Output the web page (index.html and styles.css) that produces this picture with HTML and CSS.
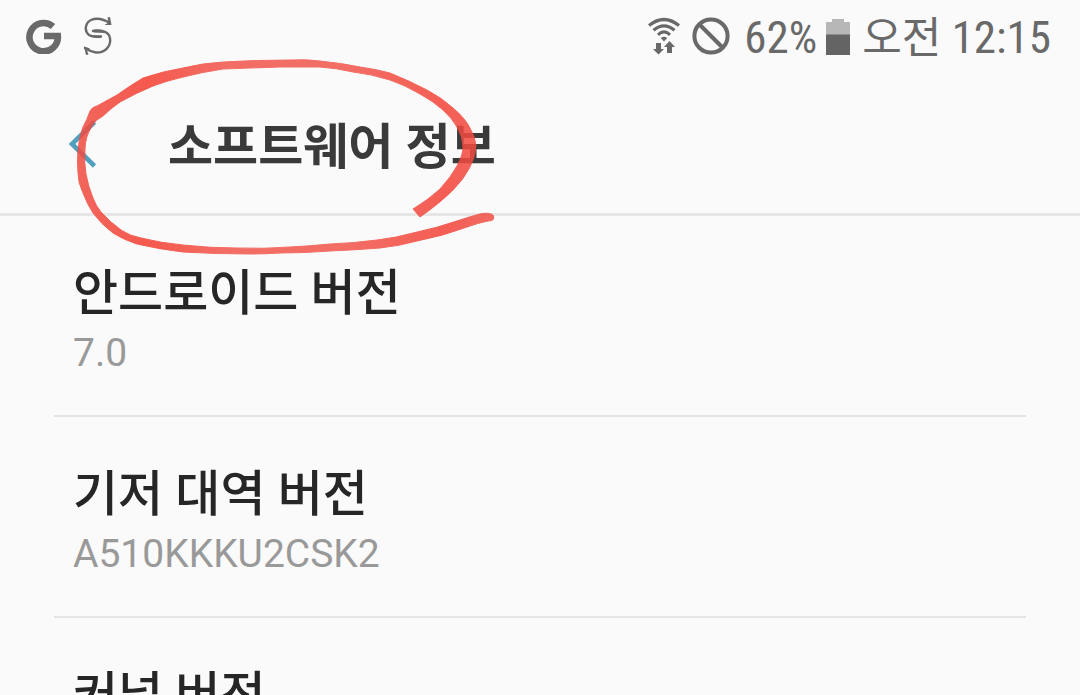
FILE: index.html
```html
<!DOCTYPE html>
<html lang="ko">
<head>
<meta charset="utf-8">
<meta name="viewport" content="width=device-width, initial-scale=1">
<title>소프트웨어 정보</title>
<link rel="stylesheet" href="styles.css">
</head>
<body>
<div class="screen">
  <div class="status-bar">
    <div class="status-group notifications">
      <svg class="icon-google" viewBox="0 0 36 36" width="36" height="36" aria-hidden="true">
        <path d="M27 8.5A14.2 14.2 0 1 0 31.8 18H18" fill="none" stroke="#696969" stroke-width="6.6"/>
      </svg>
      <svg class="icon-s" viewBox="0 0 30 40" width="30" height="40" aria-hidden="true">
        <g fill="none" stroke="#696969" stroke-width="2.4" stroke-linecap="round" stroke-linejoin="round">
          <path d="M26 6.500C20 3 13 2 8 4C2 7 1 15 6 19C9 21 14 21 18 20.5"/>
          <path d="M10 15C17 13.5 26 15 27 22C28.500 31 21 37 13 36.500C9 36 5 34 2 32"/>
        </g>
        <path d="M11 13.500Q18 13 22 17L11 16.500ZM18 22Q11 22.500 7 19L18 19.500ZM24.500 1.500L27 1L28.500 9L21.500 9L25.500 6.500ZM1 30.500L7 32.500L4 34L5.500 38.500L3 39Z" fill="#696969"/>
      </svg>
    </div>
    <div class="status-group system">
      <svg viewBox="0 0 32 38" width="32" height="38" aria-hidden="true">
        <g fill="none" stroke="#696969" stroke-width="3.2">
          <path d="M1 8.500Q16 -3.500 31 8.500"/>
          <path d="M5.500 13.200Q16 4.500 26.500 13.200"/>
          <path d="M10 17.800Q16 12 22 17.800"/>
        </g>
        <path d="M12.800 21Q16 18.500 19.200 21L16 24.500ZM8 26h5v6h3l-5.500 5.500L5 32h3ZM19 36v-6h-3l5.500-6L27 30h-3v6Z" fill="#696969"/>
      </svg>
      <svg class="icon-blocked" viewBox="0 0 38 38" width="38" height="38" aria-hidden="true">
        <g fill="none" stroke="#696969" stroke-width="4"><circle cx="19" cy="19" r="16.600"/><path d="M7.500 7.500L30.500 30.500"/></g>
      </svg>
      <span class="status-text">62%</span>
      <svg class="icon-battery" viewBox="0 0 24 37" width="24" height="37" aria-hidden="true">
        <path d="M0 4h6V1h12v3h6v13H0Z" fill="#b7b7b7"/><path d="M0 16.500h24V37H0Z" fill="#646464"/>
      </svg>
      <span class="status-text"><span class="meridiem">오전</span> 12:15</span>
    </div>
  </div>
  <header class="header">
    <button class="back" type="button" aria-label="뒤로">
      <svg viewBox="0 0 30 48" width="30" height="48" aria-hidden="true"><path d="M26.500 2L4 24L26.500 46" fill="none" stroke="#4f9fbd" stroke-width="4.600"/></svg>
    </button>
    <h1 class="title">소프트웨어 정보</h1>
    <svg class="marker" viewBox="70 55 430 205" width="430" height="205" aria-hidden="true">
      <defs>
        <linearGradient id="ink" x1="0" y1="0" x2="1" y2="0">
          <stop offset="0" stop-color="#f04e43"/><stop offset=".17" stop-color="#f53f32"/><stop offset=".35" stop-color="#f1564c"/><stop offset=".65" stop-color="#f1564c"/><stop offset=".88" stop-color="#f4453a"/><stop offset="1" stop-color="#ef5248"/>
        </linearGradient>
      </defs>
      <path fill="url(#ink)" stroke="url(#ink)" stroke-width="1" stroke-linejoin="round" d="M413 209Q428 200 440 189Q451 177 457 166Q463 155 463 147Q463 137 457 127Q452 118 443 110Q433 101 420 94Q405 85 390 80Q371 74 353 72Q336 68 320 67Q300 67 280 67Q250 68 223 69Q203 72 183 77Q166 81 153 86Q136 93 120 102Q110 109 103 116Q95 120 92 126Q85 137 85 149Q84 163 86 174Q88 186 93 198Q96 206 101 212Q110 222 121 230Q130 236 141 238Q161 243 183 245Q210 248 237 248Q264 249 290 247Q310 246 330 244Q354 243 377 240Q395 238 413 233Q437 228 460 220Q472 216 480 214Q489 212 493 215Q496 221 488 221Q478 223 467 227Q443 236 417 241Q399 246 380 248Q355 250 330 251Q305 253 280 253Q265 254 250 254Q216 254 183 252Q158 249 137 244Q124 240 113 233Q101 224 93 213Q87 204 83 193Q78 183 78 173Q77 161 78 150Q79 137 83 127Q87 120 90 111Q92 107 97 106L117 95Q131 85 143 78Q164 71 183 68Q203 63 223 62Q256 60 290 60Q306 59 320 61Q341 63 360 67Q375 69 390 73Q410 81 427 90Q442 98 453 108Q465 118 470 128Q475 137 476 145Q476 155 470 167Q464 179 453 190Q440 203 420 217Z"/>
    </svg>
  </header>
  <main class="list">
    <section class="item"><h2 class="item-title">안드로이드 버전</h2><p class="item-value">7.0</p></section>
    <section class="item"><h2 class="item-title">기저 대역 버전</h2><p class="item-value">A510KKKU2CSK2</p></section>
    <section class="item"><h2 class="item-title">커널 버전</h2></section>
  </main>
</div>
</body>
</html>
```
FILE: styles.css
```css
* { box-sizing: border-box; }
body {
  margin: 0;
  background: #fafafa;
  font-family: Roboto, "Noto Sans CJK KR", sans-serif;
}
.screen { height: 100vh; overflow: hidden; }
svg { display: block; flex: none; }
.status-bar {
  display: flex;
  justify-content: space-between;
  align-items: center;
  height: 72px;
  padding: 0 29px 0 26px;
  color: #696969;
}
.status-group { display: flex; align-items: center; }
.notifications { gap: 21px; }
.icon-blocked { margin: 0 14px 0 12px; }
.icon-battery { margin: 0 12px 0 9px; }
.status-text {
  padding-top: 4px;
  font-family: "Roboto Condensed", Roboto, "Noto Sans CJK KR", sans-serif;
  font-size: 45px;
  line-height: 60px;
  white-space: nowrap;
}
.meridiem { font-size: 43px; line-height: 1; }
.header {
  position: relative;
  display: flex;
  align-items: center;
  gap: 70px;
  height: 144px;
  padding: 2px 68px 0 68px;
  border-bottom: 3px solid #e6e6e6;
}
.back { padding: 0; border: 0; background: none; cursor: pointer; }
.title {
  margin: 0;
  padding-top: 8px;
  color: #3a3a3a;
  font-size: 49px;
  font-weight: 700;
  line-height: 72px;
}
.marker {
  position: absolute;
  left: 70px;
  top: -17px;
  opacity: .86;
  pointer-events: none;
}
.list { padding: 0 54px; }
.item {
  height: 201px;
  padding: 42px 19px 0;
  border-bottom: 2px solid #e4e4e4;
}
.item-title {
  margin: 0;
  color: #262626;
  font-size: 49px;
  font-weight: 500;
  line-height: 72px;
}
.item-value {
  margin: 0;
  color: #999;
  font-size: 39px;
  line-height: 46px;
}
```
